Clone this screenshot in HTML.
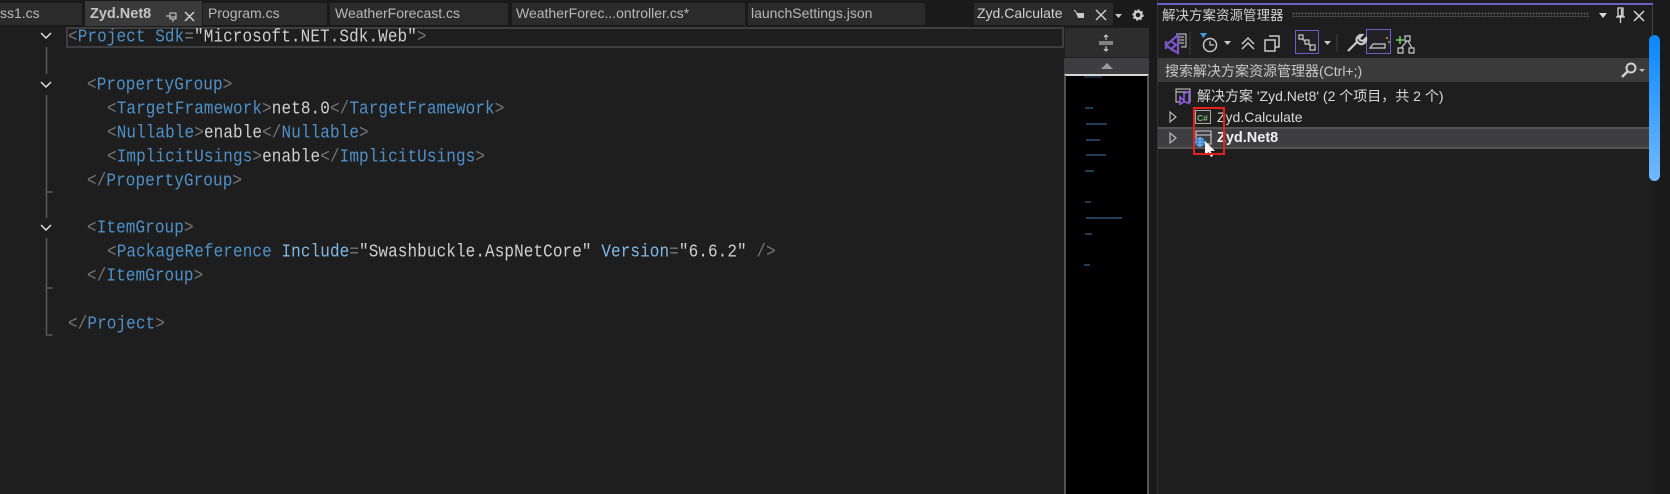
<!DOCTYPE html>
<html><head><meta charset="utf-8"><style>
html,body{margin:0;padding:0;background:#1e1e1e}
#r{position:relative;width:1670px;height:494px;overflow:hidden;background:#1e1e1e;font-family:"Liberation Sans","Noto Sans CJK SC",sans-serif;color:#d0d0d0}
#r div,#r svg{position:absolute}
.tab{top:3px;height:22px;background:#2b2b2b;color:#b8b8b8;font-size:14px;line-height:21px;white-space:nowrap}
.c{left:0;font-family:"Liberation Mono",monospace;font-size:16px;letter-spacing:.09px;line-height:24px;height:24px;white-space:pre;transform:scaleY(1.14);color:#cfcfcf}
.c i{font-style:normal;color:#757575}.c b{font-weight:normal;color:#4f90c8}.c u{text-decoration:none;color:#82b8e4}
.t{white-space:nowrap;font-size:14px;line-height:18px;color:#d8d8d8}
.m{height:2px;background:#3f78ac;opacity:.5}
</style></head><body><div id="r">
<div style="left:0;top:0;width:1157px;height:27px;background:#1a1a1a"></div>
<div class="tab" style="left:0;width:82px;">ss1.cs</div>
<div class="tab" style="left:85px;top:1px;height:25px;line-height:26px;font-weight:bold;font-size:14.500px;padding-left:5px;width:112px;background:#3a3a3a;color:#c4c4c4">Zyd.Net8</div>
<svg style="left:165px;top:9px" width="32" height="14" fill="none" stroke="#d0d0d0"><path d="M1 7h4M5 4h6v6H5zM5 8h6M8 10v3" stroke-width="1"/><path d="M20 3l9 9M29 3l-9 9" stroke-width="1.500"/></svg>
<div class="tab" style="left:203px;width:124px;padding-left:5px;box-sizing:border-box">Program.cs</div>
<div class="tab" style="left:330px;width:178px;padding-left:5px;box-sizing:border-box">WeatherForecast.cs</div>
<div class="tab" style="left:512px;width:233px;padding-left:4px;box-sizing:border-box">WeatherForec...ontroller.cs*</div>
<div class="tab" style="left:748px;width:177px;padding-left:3px;box-sizing:border-box">launchSettings.json</div>
<div class="tab" style="left:974px;width:139px;padding-left:3px;box-sizing:border-box;color:#d0d0d0">Zyd.Calculate</div>
<svg style="left:1072px;top:7px" width="84" height="16" fill="none" stroke="#d0d0d0"><path d="M2 3l3 3" stroke-width="1"/><path d="M4 6h8v5H6z" fill="#c8c8c8" stroke="none"/><path d="M24 3l10 10M34 3l-10 10" stroke-width="1.400"/><path d="M43 7h7l-3.500 4z" fill="#c8c8c8" stroke="none"/><circle cx="66" cy="8" r="3.500" stroke-width="2.400"/><circle cx="66" cy="8" r="5.200" stroke-width="1" stroke-dasharray="2 2"/></svg>

<div style="left:66px;top:27px;width:998px;height:21px;border:2px solid #3e3e3e;box-sizing:border-box"></div>
<svg style="left:36px;top:26px" width="22" height="320" fill="none">
<path d="M5 7l5 5 5-5M5 56l5 5 5-5M5 199l5 5 5-5" stroke="#e0e0e0" stroke-width="1.500"/>
<path d="M10.500 21v27M10.500 69v123M10.500 166h6M10.500 212v97h6M10.500 262h6" stroke="#5a5a5a" stroke-width="1.500"/></svg>

<div class="c" style="top:25px;left:68px"><i>&lt;</i><b>Project Sdk</b><i>=</i>"Microsoft.NET.Sdk.Web"<i>&gt;</i></div>
<div class="c" style="top:73px;left:87px"><i>&lt;</i><b>PropertyGroup</b><i>&gt;</i></div>
<div class="c" style="top:97px;left:107px"><i>&lt;</i><b>TargetFramework</b><i>&gt;</i>net8.0<i>&lt;/</i><b>TargetFramework</b><i>&gt;</i></div>
<div class="c" style="top:121px;left:107px"><i>&lt;</i><b>Nullable</b><i>&gt;</i>enable<i>&lt;/</i><b>Nullable</b><i>&gt;</i></div>
<div class="c" style="top:145px;left:107px"><i>&lt;</i><b>ImplicitUsings</b><i>&gt;</i>enable<i>&lt;/</i><b>ImplicitUsings</b><i>&gt;</i></div>
<div class="c" style="top:169px;left:87px"><i>&lt;/</i><b>PropertyGroup</b><i>&gt;</i></div>
<div class="c" style="top:216px;left:87px"><i>&lt;</i><b>ItemGroup</b><i>&gt;</i></div>
<div class="c" style="top:240px;left:107px"><i>&lt;</i><b>PackageReference</b> <u>Include</u><i>=</i>"Swashbuckle.AspNetCore" <u>Version</u><i>=</i>"6.6.2" <i>/&gt;</i></div>
<div class="c" style="top:264px;left:87px"><i>&lt;/</i><b>ItemGroup</b><i>&gt;</i></div>
<div class="c" style="top:312px;left:68px"><i>&lt;/</i><b>Project</b><i>&gt;</i></div>

<div style="left:1065px;top:28px;width:85px;height:29px;background:#2d2d2d"></div>
<svg style="left:1097px;top:34px" width="20" height="18" fill="none" stroke="#d8d8d8"><path d="M2 8h14M2 10h14" stroke-width="1"/><path d="M9 1v5M9 12v5M7 3l2-2 2 2M7 15l2 2 2-2" stroke-width="1"/></svg>
<div style="left:1064px;top:58px;width:85px;height:16px;background:#3e3e40"></div>
<svg style="left:1097px;top:60px" width="20" height="12"><path d="M4 9h12L10 3z" fill="#9a9a9a"/></svg>
<div style="left:1064px;top:74px;width:85px;height:420px;background:#000;box-sizing:border-box;border-left:2px solid #555;border-right:2px solid #555;border-top:2px solid #d8d8d8"></div>
<div class="m" style="left:1084px;top:76px;width:18px;opacity:.35"></div>
<div class="m" style="left:1085px;top:107px;width:8px"></div>
<div class="m" style="left:1086px;top:123px;width:21px"></div>
<div class="m" style="left:1086px;top:139px;width:14px"></div>
<div class="m" style="left:1086px;top:154px;width:20px"></div>
<div class="m" style="left:1085px;top:170px;width:9px"></div>
<div class="m" style="left:1085px;top:201px;width:6px"></div>
<div class="m" style="left:1086px;top:217px;width:36px"></div>
<div class="m" style="left:1085px;top:233px;width:7px"></div>
<div class="m" style="left:1084px;top:264px;width:6px"></div>

<div style="left:1149px;top:0;width:8px;height:494px;background:#1a1a1a"></div>
<div style="left:1157px;top:0;width:496px;height:494px;background:#1e1e1e"></div>
<div style="left:1157px;top:0;width:1px;height:494px;background:#333"></div>
<div style="left:1653px;top:0;width:17px;height:494px;background:#1a1a1a"></div>
<div style="left:1652px;top:4px;width:1px;height:32px;background:#444"></div>
<div style="left:1157px;top:3px;width:496px;height:2px;background:#6a5fc8"></div>
<div class="t" style="left:1162px;top:7px;font-size:13.500px;color:#d0d0d0">解决方案资源管理器</div>
<div style="left:1292px;top:12px;width:298px;height:5px;background-image:radial-gradient(#555 .8px,transparent .9px);background-size:3px 3px"></div>
<svg style="left:1597px;top:6px" width="52" height="18" fill="none" stroke="#d8d8d8"><path d="M2 7h8l-4 5z" fill="#d8d8d8" stroke="none"/><path d="M21 2h5v8h-5zM19 11h9M23.500 11v6M24.500 3v7" stroke-width="1.300"/><path d="M37 5l10 10M47 5l-10 10" stroke-width="1.500"/></svg>

<svg style="left:1160px;top:28px" width="130" height="30" fill="none" stroke="#c8c8c8">
<path d="M16 6h10v13h-5" stroke="#d0d0d0" fill="#2a2a2a"/><path d="M18 9h6M18 12h6M18 15h6" stroke-width="1"/>
<path d="M6 17l5-4 5 4-5 4zM11 13l7-6v18l-7-4M6 13v8" stroke="#7a55c8" stroke-width="2.200" fill="none"/>
<path d="M30 4v23" stroke="#3e3e3e" stroke-width="1"/>
<path d="M40 5h7l-3.500 5z" fill="#3aa0e8" stroke="none"/><circle cx="50" cy="17" r="6.500" stroke-width="1.500"/><path d="M50 13v4h4" stroke-width="1.200"/>
<path d="M64 13h7l-3.500 4z" fill="#c8c8c8" stroke="none"/>
<path d="M82 16l6-6 6 6M82 21l6-6 6 6" stroke-width="1.500"/>
<path d="M105 12h10v11h-10zM109 8h10v11h-4" stroke-width="1.500"/></svg>
<div style="left:1295px;top:30px;width:24px;height:24px;border:1px solid #6a5fc8;background:#222226;box-sizing:border-box"></div>
<div style="left:1366px;top:29px;width:25px;height:25px;border:1.500px solid #6a5fc8;background:#222226;box-sizing:border-box"></div>
<svg style="left:1290px;top:28px" width="130" height="30" fill="none" stroke="#c8c8c8">
<path d="M9 7h4v4H9zM15 12h4v4h-4zM20 17h5v5h-5zM12 11l3 2M18 16l3 2" stroke-width="1.200"/>
<path d="M34 13h7l-3.500 4z" fill="#c8c8c8" stroke="none"/>
<path d="M47 6v18" stroke="#3e3e3e"/>
<path d="M58 23l10-10M72 7a5 5 0 0 0-5 7l3 2a5 5 0 0 0 6-6l-3 3-3-1-1-2z" stroke-width="2.200"/>
<path d="M80 20h15v-4H83z" stroke-width="1.200"/><path d="M96 10h2M98 14h2" stroke="#d0a040" stroke-width="1.500"/>
<path d="M106 12h8M110 8v8" stroke="#6ad06a" stroke-width="1.500"/><path d="M115 8h5v5h-5zM108 20h5v5h-5zM119 20h5v5h-5zM117 13l-6 7M118 13l4 7" stroke-width="1.200"/>
</svg>

<div style="left:1158px;top:58px;width:491px;height:24px;background:#3a3a3a"></div>
<div class="t" style="left:1165px;top:62px;color:#c8c8c8">搜索解决方案资源管理器(Ctrl+;)</div>
<svg style="left:1618px;top:60px" width="30" height="20" fill="none" stroke="#d0d0d0"><circle cx="13" cy="8" r="4.500" stroke-width="2"/><path d="M10 11l-6 6" stroke-width="2.500"/><path d="M21 9h6l-3 3z" fill="#bbb" stroke="none"/></svg>

<svg style="left:1174px;top:87px" width="20" height="18" fill="none"><path d="M2 2h14v13h-14zM2 5h14" stroke="#b0b0b0" stroke-width="1.200"/><path d="M6 10l4 3.500v-7l5-2v12l-5-2-4 3z" fill="#1e1e1e" stroke="#8a5ce0" stroke-width="1.600"/></svg>
<div class="t" style="left:1197px;top:87px">解决方案 'Zyd.Net8' (2 个项目，共 2 个)</div>
<div style="left:1158px;top:127px;width:491px;height:22px;background:#3e3e40;box-sizing:border-box;border-top:2px solid #555;border-bottom:2px solid #555"></div>
<svg style="left:1168px;top:110px" width="10" height="36" fill="none" stroke="#b8b8b8"><path d="M2 2l6 5-6 5zM2 23l6 5-6 5z" stroke-width="1.200"/></svg>
<svg style="left:1195px;top:110px" width="17" height="15"><rect x=".5" y=".5" width="15" height="13" fill="#252525" stroke="#a8a8a8"/><text x="2" y="11" font-family="Liberation Sans" font-size="8.500" font-weight="bold" fill="#6cc36c">C#</text></svg>
<div class="t" style="left:1217px;top:108px">Zyd.Calculate</div>
<svg style="left:1195px;top:130px" width="32" height="30" fill="none"><path d="M1 1h15v13h-15zM1 5h15" stroke="#b8b8b8" stroke-width="1.300"/><circle cx="5" cy="12" r="5" fill="#3a80c8"/><path d="M0 12h10M5 7v10M2 9h6M2 15h6" stroke="#8cc4f0" stroke-width=".8"/><path d="M10 11v14l3.500-3 2.500 5 2-1-2.500-5h4.500z" fill="#f4f4f4"/></svg>
<div class="t" style="left:1217px;top:129px;font-weight:bold;font-size:14.500px;color:#f0f0f0">Zyd.Net8</div>
<div style="left:1193px;top:107px;width:32px;height:48px;border:2px solid #e8201c;box-sizing:border-box"></div>
<div style="left:1649px;top:35px;width:11px;height:146px;border-radius:6px;background:linear-gradient(#0a86fa,#72baff)"></div>
</div></body></html>
